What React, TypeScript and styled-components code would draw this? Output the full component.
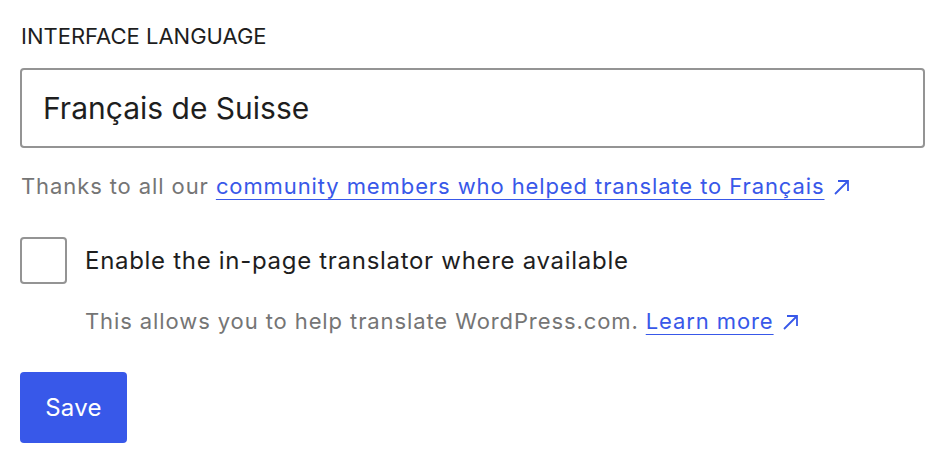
import React from "react";
import styled, { createGlobalStyle } from "styled-components";

const GlobalStyle = createGlobalStyle`
  body {
    margin: 0;
    background: #fff;
    font-family: Inter, "Noto Sans", sans-serif;
    color: #1e1e1e;
  }
`;

const Form = styled.div`
  display: flex;
  flex-direction: column;
  align-items: flex-start;
  padding: 22px 19px 0 20px;
`;

const FieldLabel = styled.div`
  font-size: 22px;
  line-height: 28px;
  text-transform: uppercase;
  padding-left: 1px;
`;

const LanguageInput = styled.div`
  box-sizing: border-box;
  align-self: stretch;
  margin-top: 18px;
  height: 80px;
  border: 2px solid #949494;
  border-radius: 4px;
  display: flex;
  align-items: center;
  padding-left: 21px;
  font-size: 30px;
`;

const Help = styled.p<{ $indent?: boolean; $top: number }>`
  margin: ${(p) => p.$top}px 0 0;
  padding-left: ${(p) => (p.$indent ? 65 : 1)}px;
  font-size: 22px;
  line-height: 28px;
  letter-spacing: 0.9px;
  color: #757575;
`;

const Link = styled.a`
  color: #3858e9;
  text-decoration: underline;
  text-underline-offset: 5px;
  text-decoration-thickness: 1px;
`;

const Arrow = styled.svg`
  width: 16px;
  height: 16px;
  margin-left: 8px;
  vertical-align: -1px;
  color: #3858e9;
`;

const CheckRow = styled.label`
  display: flex;
  align-items: center;
  gap: 18px;
  margin-top: 37px;
  font-size: 24px;
  letter-spacing: 0.7px;
`;

const Box = styled.span`
  box-sizing: border-box;
  width: 47px;
  height: 47px;
  border: 2px solid #949494;
  border-radius: 4px;
`;

const SaveButton = styled.button`
  margin-top: 37px;
  width: 107px;
  height: 71px;
  border: none;
  border-radius: 4px;
  background: #3858e9;
  color: #fff;
  font-family: Inter, "Noto Sans", sans-serif;
  font-size: 24px;
  letter-spacing: 0.3px;
`;

const External = ({ children }: { children: React.ReactNode }) => (
  <>
    <Link href="#">{children}</Link>
    <Arrow viewBox="0 0 16 16" fill="none" stroke="currentColor" strokeWidth="1.8">
      <path d="M2 15 L14.5 2.5 M5 2 H15 V12" />
    </Arrow>
  </>
);

export default function App() {
  return (
    <>
      <GlobalStyle />
      <Form>
        <FieldLabel>Interface Language</FieldLabel>
        <LanguageInput>Français de Suisse</LanguageInput>
        <Help $top={24}>
          Thanks to all our{" "}
          <External>community members who helped translate to Français</External>
        </Help>
        <CheckRow>
          <Box />
          Enable the in-page translator where available
        </CheckRow>
        <Help $indent $top={23}>
          This allows you to help translate WordPress.com.{" "}
          <External>Learn more</External>
        </Help>
        <SaveButton>Save</SaveButton>
      </Form>
    </>
  );
}
